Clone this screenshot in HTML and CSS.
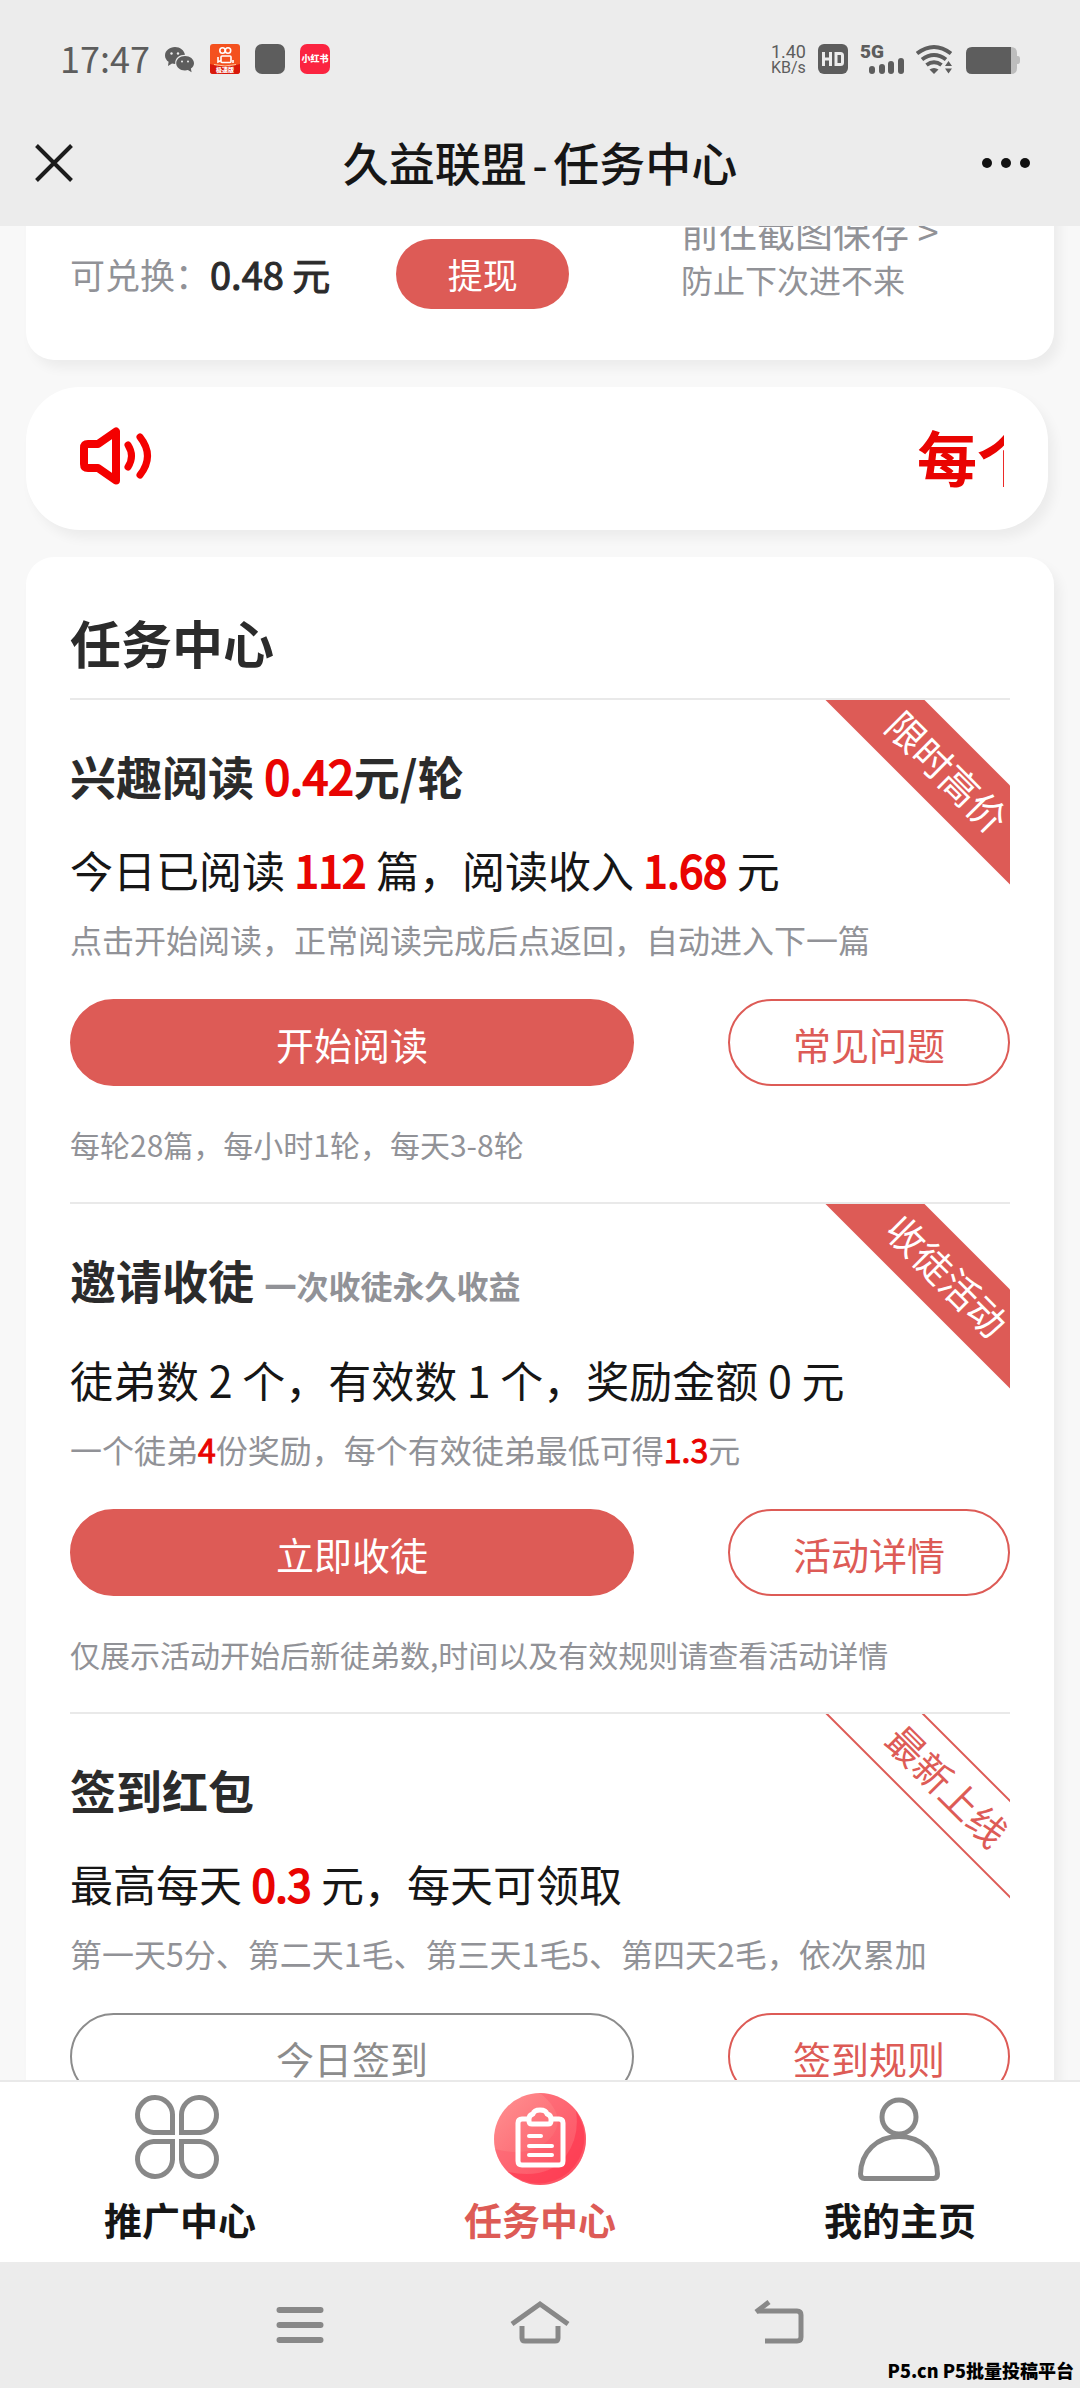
FILE: index.html
```html
<!DOCTYPE html>
<html lang="zh-CN">
<head>
<meta charset="utf-8">
<meta name="viewport" content="width=device-width, initial-scale=1">
<title>久益联盟-任务中心</title>
<link rel="stylesheet" href="styles.css">
</head>
<body>
<header class="top">
  <div class="status">
    <div class="status__group">
      <span class="status__time">17:47</span>
      <svg class="status__wechat" width="30" height="30" viewBox="0 0 30 30" aria-hidden="true">
        <path fill="#5d5d5d" d="M10 3C4.500 3 0 6.700 0 11.400c0 2.600 1.400 4.900 3.600 6.400L3 22l4-2.500c1 .3 2 .4 3.200.4C10 13.500 14.500 10.800 20 10.800 19.200 6.200 15 3 10 3z"/>
        <path fill="#5d5d5d" d="M20 12c-5 0-8.800 3.200-8.800 7.200s3.800 7.200 8.800 7.200c1 0 2-.1 2.900-.4l3.700 2.200-.7-3.600c2-1.300 3.100-3.200 3.100-5.400C29 15.200 25 12 20 12z"/>
        <g fill="#ececec"><circle cx="6.500" cy="9.500" r="1.200"/><circle cx="13" cy="9.500" r="1.200"/><circle cx="17" cy="17.500" r="1"/><circle cx="23" cy="17.500" r="1"/></g>
      </svg>
      <svg width="30" height="30" viewBox="0 0 30 30" aria-hidden="true">
        <rect width="30" height="30" rx="3" fill="#f4511e"/>
        <path d="M0 20q15 5 30 0v7a3 3 0 0 1-3 3H3a3 3 0 0 1-3-3z" fill="#d8190b"/>
        <g fill="none" stroke="#fff" stroke-width="1.600"><circle cx="12.500" cy="6.500" r="2.700"/><circle cx="18" cy="6.500" r="2.700"/><rect x="11" y="12" width="10" height="6.500" rx="1"/><path d="M8 13v5l3-1.500M23 16v3"/></g>
        <path d="M4 20.500q11 3 22 0" fill="none" stroke="#ffc69a" stroke-width="1"/>
        <text x="15" y="28" text-anchor="middle" class="app-text app-text--small">极速版</text>
      </svg>
      <svg width="30" height="30" viewBox="0 0 30 30" aria-hidden="true"><rect width="30" height="30" rx="7" fill="#5d5d5d"/></svg>
      <svg width="30" height="30" viewBox="0 0 30 30" aria-hidden="true">
        <rect width="30" height="30" rx="7" fill="#fb2440"/>
        <text x="15" y="18" text-anchor="middle" class="app-text">小红书</text>
      </svg>
    </div>
    <div class="status__group status__group--right">
      <span class="speed"><span>1.40</span><span class="speed__unit">KB/s</span></span>
      <svg width="30" height="30" viewBox="0 0 30 30" aria-hidden="true">
        <rect width="30" height="30" rx="6" fill="#5d5d5d"/>
        <path d="M5.500 8v14M12.500 8v14M5.500 15h7M18 9.500h4.500q2 0 2 2v7q0 2-2 2H18z" fill="none" stroke="#ececec" stroke-width="3"/>
      </svg>
      <svg width="44" height="30" viewBox="0 0 44 30" aria-hidden="true">
        <text x="0" y="14" class="net-text">5G</text>
        <g fill="#5d5d5d"><rect x="9" y="22" width="6" height="8" rx="3"/><rect x="19" y="20" width="6" height="10" rx="3"/><rect x="28" y="17" width="6" height="13" rx="3"/><rect x="38" y="14" width="6" height="16" rx="3"/></g>
      </svg>
      <svg width="38" height="30" viewBox="0 0 38 30" aria-hidden="true">
        <g fill="none" stroke="#5d5d5d" stroke-width="4"><path d="M1 9.500q17-13 34 0"/><path d="M6 15.500q12-9 24 0"/><path d="M10.500 21q7.500-5.500 15 0"/></g>
        <path d="M13.500 25.500q4.500-3 9 0L18 30z" fill="#5d5d5d"/>
        <path d="M29 22l3.500-5 3.500 5zM29 24.500l3.500 5 3.500-5z" fill="#5d5d5d"/>
      </svg>
      <svg width="54" height="30" viewBox="0 0 54 30" aria-hidden="true">
        <path d="M44 3h1q6 0 6 6v3h1q2 0 2 3v2q0 3-2 3h-1v4q0 6-6 6h-1z" fill="#bdbdbd"/>
        <path d="M6 3h39v27H6q-6 0-6-6V9q0-6 6-6z" fill="#5d5d5d"/>
      </svg>
    </div>
  </div>
  <div class="titlebar">
    <button class="icon-button" type="button" aria-label="关闭">
      <svg width="38" height="38" viewBox="0 0 38 38"><path d="M1.500 1.500l35 35M36.500 1.500l-35 35" stroke="#1c1c1c" stroke-width="4" fill="none"/></svg>
    </button>
    <h1 class="titlebar__title">久益联盟<span class="titlebar__dash">-</span>任务中心</h1>
    <button class="icon-button icon-button--end" type="button" aria-label="更多">
      <svg width="50" height="12" viewBox="0 0 50 12" fill="#111"><circle cx="6" cy="6" r="5"/><circle cx="25" cy="6" r="5"/><circle cx="44" cy="6" r="5"/></svg>
    </button>
  </div>
</header>

<main class="content">
  <section class="card account">
    <div class="account__balance">
      <span class="account__label">可兑换：</span><strong class="account__amount">0.48 元</strong>
      <button class="account__withdraw" type="button">提现</button>
    </div>
    <div class="account__tip">
      <a class="account__link" href="#save">前往截图保存 &gt;</a>
      <span>防止下次进不来</span>
    </div>
  </section>

  <section class="card notice">
    <svg width="72" height="58" viewBox="0 0 72 58" fill="none" stroke="#f40000" stroke-width="8" stroke-linecap="round" stroke-linejoin="round" aria-hidden="true">
      <path d="M8 17h10L36 4.500v49L18 41H8q-4 0-4-4V21q0-4 4-4z"/>
      <path d="M48 18q7 11 0 22M60 10q15 19 0 38" stroke-width="7"/>
    </svg>
    <div class="notice__track"><span class="notice__text">每个</span></div>
  </section>

  <section class="card tasks">
    <h2 class="tasks__title">任务中心</h2>

    <article class="task">
      <span class="ribbon">限时高价</span>
      <h3 class="task__title">兴趣阅读 <em>0.42</em>元/轮</h3>
      <p class="task__summary">今日已阅读 <em>112</em> 篇，阅读收入 <em>1.68</em> 元</p>
      <p class="task__hint">点击开始阅读，正常阅读完成后点返回，自动进入下一篇</p>
      <div class="task__actions">
        <button class="button button--main" type="button">开始阅读</button>
        <button class="button button--side" type="button">常见问题</button>
      </div>
      <p class="task__note">每轮28篇，每小时1轮，每天3-8轮</p>
    </article>

    <article class="task">
      <span class="ribbon">收徒活动</span>
      <h3 class="task__title">邀请收徒 <small>一次收徒永久收益</small></h3>
      <p class="task__summary">徒弟数 2 个，有效数 1 个，奖励金额 0 元</p>
      <p class="task__hint">一个徒弟<em>4</em>份奖励，每个有效徒弟最低可得<em>1.3</em>元</p>
      <div class="task__actions">
        <button class="button button--main" type="button">立即收徒</button>
        <button class="button button--side" type="button">活动详情</button>
      </div>
      <p class="task__note">仅展示活动开始后新徒弟数,时间以及有效规则请查看活动详情</p>
    </article>

    <article class="task">
      <span class="ribbon ribbon--outline">最新上线</span>
      <h3 class="task__title">签到红包</h3>
      <p class="task__summary">最高每天 <em>0.3</em> 元，每天可领取</p>
      <p class="task__hint">第一天5分、第二天1毛、第三天1毛5、第四天2毛，依次累加</p>
      <div class="task__actions">
        <button class="button button--main button--muted" type="button">今日签到</button>
        <button class="button button--side" type="button">签到规则</button>
      </div>
    </article>
  </section>
</main>

<nav class="tabs">
  <a class="tab" href="#promote">
    <svg width="92" height="92" viewBox="0 0 92 92" fill="none" stroke="#888" stroke-width="5" aria-hidden="true">
      <path d="M38.500 39.500H19.500a17.500 17.500 0 1 1 19-18zM47.500 39.500H66.500a17.500 17.500 0 1 0-19-18zM38.500 48.500H19.500a17.500 17.500 0 1 0 19 18zM47.500 48.500H66.500a17.500 17.500 0 1 1-19 18z"/>
    </svg>
    <span>推广中心</span>
  </a>
  <a class="tab tab--active" href="#tasks">
    <svg width="92" height="92" viewBox="0 0 92 92" aria-hidden="true">
      <defs>
        <linearGradient id="disc" x1="0" y1="0" x2="1" y2="1"><stop offset="0" stop-color="#ff9292"/><stop offset="1" stop-color="#fb4a5c"/></linearGradient>
      </defs>
      <circle cx="46" cy="46" r="46" fill="url(#disc)"/>
      <path d="M46 0a46 46 0 1 1-45 56q40 10 58-14 14-20-13-42z" fill="#ff5468" opacity=".35"/>
      <path d="M82 18a46 46 0 0 1-68 61q40 8 58-16 14-20 10-45z" fill="#ff3049" opacity=".55"/>
      <g fill="none" stroke="#fff" stroke-width="5" stroke-linecap="round" stroke-linejoin="round">
        <path d="M34 26h-6q-4 0-4 4v38q0 4 4 4h37q4 0 4-4V30q0-4-4-4h-6"/>
        <path d="M38 31q-3 0-3-3v-2q0-4 4-5 1-4 7-4t7 4q4 1 4 5v2q0 3-3 3z"/>
        <path d="M35 43h12M35 53h23M35 62h23" stroke-width="4"/>
      </g>
    </svg>
    <span>任务中心</span>
  </a>
  <a class="tab" href="#mine">
    <svg width="92" height="92" viewBox="0 0 92 92" fill="none" stroke="#888" stroke-width="5" aria-hidden="true">
      <circle cx="45" cy="24" r="17"/>
      <path d="M45 43.500C23 43.500 7 59 6.500 81q0 4.500 4 4.500h69q4 0 4-4.500C83 59 67 43.500 45 43.500z"/>
    </svg>
    <span>我的主页</span>
  </a>
</nav>

<footer class="system">
  <button class="icon-button" type="button" aria-label="菜单">
    <svg width="60" height="44" viewBox="0 0 60 44"><path d="M9.500 10h41M9.500 25h41M9.500 40h41" stroke="#888" stroke-width="6" stroke-linecap="round" fill="none"/></svg>
  </button>
  <button class="icon-button" type="button" aria-label="主屏幕">
    <svg width="60" height="44" viewBox="0 0 60 44" fill="none" stroke="#888" stroke-width="5"><path d="M2 24L30 4l28 20"/><path d="M12 26v12q0 3 3 3h30q3 0 3-3V26" stroke-width="5"/></svg>
  </button>
  <button class="icon-button" type="button" aria-label="返回">
    <svg width="60" height="44" viewBox="0 0 60 44" fill="none" stroke="#888" stroke-width="5"><path d="M8 11h39q4 0 4 4v22q0 4-4 4H15"/><path d="M19 2L6 12" /></svg>
  </button>
  <span class="watermark">P5.cn P5批量投稿平台</span>
</footer>
</body>
</html>
```

FILE: styles.css
```css
:root {
  --red: #dd5b56;
  --bright: #e90402;
  --muted: #919297;
  --line: #e9e9e9;
  --chrome: #ececec;
}

* { box-sizing: border-box; }

body {
  display: flex;
  flex-direction: column;
  height: 100vh;
  margin: 0;
  overflow: hidden;
  background: #f8f8f8;
  color: #161616;
  font-family: "Noto Sans CJK SC", sans-serif;
}

h1, h2, h3, p { margin: 0; }
em {
  color: var(--bright);
  font-style: normal;
  font-weight: 400;
  -webkit-text-stroke: 2px currentColor;
}
button { font-family: inherit; cursor: pointer; }
svg { display: block; flex: none; }

.top { flex: none; background: var(--chrome); }

.status {
  display: flex;
  justify-content: space-between;
  padding: 44px 60px 0;
  color: #5d5d5d;
}
.status__group { display: flex; gap: 15px; height: 30px; }
.status__group--right { gap: 12px; }
.status__time { font-size: 36px; line-height: 26px; }
.speed {
  display: flex;
  flex-direction: column;
  align-items: center;
  font-family: Roboto, sans-serif;
  font-size: 18px;
  line-height: 16px;
}
.speed__unit { font-size: 16px; }
.app-text { fill: #fff; font-size: 9px; font-weight: 900; }
.app-text--small { font-size: 6px; }
.net-text { fill: #5d5d5d; font: 900 19px Roboto, sans-serif; }

.titlebar {
  display: grid;
  grid-template-columns: 1fr auto 1fr;
  align-items: center;
  height: 152px;
  padding: 26px 35px 0;
}
.titlebar__title { font-size: 46px; font-weight: 500; line-height: 60px; }
.titlebar__dash { font-family: "DejaVu Sans Mono", monospace; font-size: 44px; }

.icon-button {
  display: flex;
  padding: 0;
  border: 0;
  background: none;
}
.icon-button--end { justify-self: end; padding-right: 14px; }

.content { flex: 1; min-height: 0; overflow: hidden; }

.card {
  margin: 0 26px 27px;
  padding: 0 44px;
  border-radius: 28px;
  background: #fff;
  box-shadow: 6px 8px 12px rgba(0, 0, 0, .05);
}

.account {
  display: flex;
  align-items: flex-end;
  margin-top: -60px;
  padding-top: 41px;
  padding-bottom: 51px;
}
.account__balance { display: flex; align-items: center; width: 65%; }
.account__label { color: var(--muted); font-size: 35px; line-height: 66px; }
.account__amount {
  color: #2b2b2b;
  font-size: 38px;
  font-weight: 400;
  line-height: 66px;
  -webkit-text-stroke: 1px currentColor;
}
.account__withdraw {
  width: 173px;
  height: 70px;
  margin-left: 66px;
  padding: 0 0 2px;
  border: 0;
  border-radius: 35px;
  background: var(--red);
  color: #fff;
  font-size: 35px;
}
.account__tip {
  display: flex;
  flex-direction: column;
  padding-bottom: 6px;
  color: var(--muted);
  font-size: 32px;
  line-height: 48px;
}
.account__link { color: inherit; font-size: 38px; text-decoration: none; }

.notice {
  display: flex;
  align-items: center;
  justify-content: space-between;
  height: 143px;
  margin-right: 32px;
  padding-bottom: 5px;
  padding-left: 54px;
  border-radius: 54px;
}
.notice__track { width: 87px; overflow: hidden; }
.notice__text {
  color: var(--bright);
  font-size: 60px;
  font-weight: 700;
  line-height: 80px;
  white-space: nowrap;
}

.tasks { padding-top: 48px; }
.tasks__title {
  padding-bottom: 19px;
  border-bottom: 2px solid var(--line);
  color: #2b2b2b;
  font-size: 51px;
  line-height: 74px;
}

.task {
  position: relative;
  padding: 45px 0 38px;
  border-bottom: 2px solid var(--line);
  overflow: hidden;
}
.task__title { color: #2b2b2b; font-size: 46px; line-height: 60px; }
.task__title small { color: var(--muted); font-size: 32px; }
.task__summary { margin-top: 34px; font-size: 43px; line-height: 60px; }
.task__hint { margin-top: 18px; color: var(--muted); font-size: 32px; line-height: 44px; }
.task__hint em { -webkit-text-stroke-width: 1px; }
.task__actions { display: flex; justify-content: space-between; margin-top: 38px; }
.task__note { margin-top: 38px; color: var(--muted); font-size: 30px; line-height: 40px; }

.button {
  height: 87px;
  padding: 2px 0 0;
  border: 2px solid var(--red);
  border-radius: 44px;
  background: #fff;
  color: var(--red);
  font-size: 38px;
}
.button--main { width: 60%; background: var(--red); color: #fff; }
.button--side { width: 30%; }
.button--muted { border-color: #8c8c8c; background: #fff; color: #8c8c8c; }

/* Corner ribbon laid diagonally over the card's top right edge */
.ribbon {
  position: absolute;
  top: 37px;
  right: -77px;
  width: 280px;
  height: 70px;
  background: var(--red);
  color: #fff;
  font-size: 38px;
  line-height: 68px;
  text-align: center;
  transform: rotate(45deg);
}
.ribbon--outline {
  border: 2px solid var(--red);
  background: #fff;
  color: var(--red);
  line-height: 64px;
}

.tabs {
  display: flex;
  flex: none;
  border-top: 2px solid var(--line);
  background: #fff;
}
.tab {
  display: flex;
  flex: 1;
  flex-direction: column;
  align-items: center;
  padding: 11px 0 10px;
  color: #161616;
  font-size: 38px;
  font-weight: 700;
  line-height: 67px;
  text-decoration: none;
}
.tab--active { color: var(--red); }

.system {
  position: relative;
  display: flex;
  flex: none;
  justify-content: center;
  gap: 180px;
  padding: 38px 0 44px;
  background: var(--chrome);
}
.watermark {
  position: absolute;
  right: 6px;
  bottom: 4px;
  color: #000;
  font-size: 18px;
  font-weight: 900;
  line-height: 28px;
}
```
